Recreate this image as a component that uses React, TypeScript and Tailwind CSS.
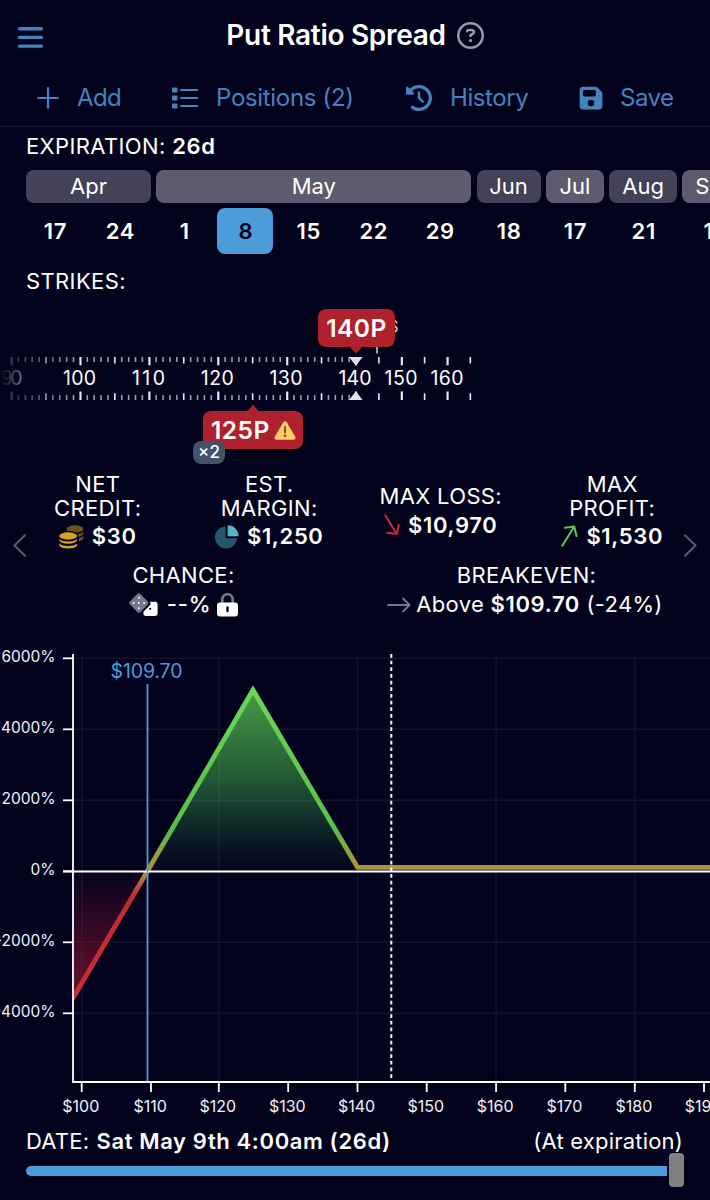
import React from "react";
import { FaClockRotateLeft, FaFloppyDisk, FaRegCircleQuestion } from "react-icons/fa6";

const months = [
  { name: "Apr", tone: "bg-[#434256]", width: "w-[125px]", days: [["17", "w-[58px]"], ["24", "w-[62px]"]] },
  { name: "May", tone: "bg-[#5d5b6d]", width: "w-[315px]", days: [["1", "w-[56px]"], ["8", "w-[56px]"], ["15", "w-[60px]"], ["22", "w-[60px]"], ["29", "w-[63px]"]] },
  { name: "Jun", tone: "bg-[#434256]", width: "w-[64px]", days: [["18", "w-[64px]"]] },
  { name: "Jul", tone: "bg-[#5d5b6d]", width: "w-[58px]", days: [["17", "w-[58px]"]] },
  { name: "Aug", tone: "bg-[#434256]", width: "w-[68px]", days: [["21", "w-[68px]"]] },
  { name: "Sep", tone: "bg-[#5d5b6d]", width: "w-[66px]", days: [["18", "w-[66px]"]] },
];

function ListIcon() {
  return (
    <svg width="27" height="22" viewBox="0 0 27 22" fill="currentColor">
      {[0.5, 8.5, 16.5].map((y) => (
        <g key={y}>
          <rect x="0" y={y} width="5.4" height="5" rx="1.2" />
          <rect x="8" y={y + 1.5} width="18.3" height="2" rx="1" />
        </g>
      ))}
    </svg>
  );
}

function Header() {
  return (
    <header className="flex h-[127px] flex-col border-b border-[#14173a] text-[#4484bd]">
      <div className="flex h-[70px] items-center px-[18px]">
        <svg className="mt-[4px]" width="25" height="23" viewBox="0 0 25 23" fill="currentColor">
          <rect y="1" width="25" height="3.4" rx="1.5" />
          <rect y="9.7" width="25" height="3.4" rx="1.5" />
          <rect y="18.4" width="25" height="3.4" rx="1.5" />
        </svg>
        <div className="flex flex-1 items-center justify-center pr-[25px]">
          <h1 className="text-[28px] font-semibold tracking-[-0.3px] text-white">Put Ratio Spread</h1>
          <FaRegCircleQuestion className="ml-[11px] text-[27px] text-[#9a98b5]" />
        </div>
      </div>
      <nav className="flex h-[56px] items-center pl-[37px] text-[24px] tracking-[-0.32px]">
        <svg width="22" height="22" viewBox="0 0 22 22" stroke="currentColor" strokeWidth="2.2" strokeLinecap="round">
          <path d="M11 1.2v19.6M1.2 11h19.6" />
        </svg>
        <span className="ml-[18px] w-[95px] tracking-[-0.6px]">Add</span>
        <ListIcon />
        <span className="ml-[17px] w-[190px] whitespace-nowrap">Positions (2)</span>
        <FaClockRotateLeft className="text-[26px]" />
        <span className="ml-[18px] w-[128px] tracking-[-0.4px]">History</span>
        <FaFloppyDisk className="text-[26px]" />
        <span className="ml-[16px] tracking-[-0.5px]">Save</span>
      </nav>
    </header>
  );
}

function Expirations() {
  return (
    <section className="h-[170px]">
      <p className="h-[43px] pl-[26px] text-[22px] leading-[38px] tracking-[0.38px]">
        EXPIRATION: <b className="font-semibold tracking-[0.6px]">26d</b>
      </p>
      <div className="flex gap-[5.3px] pl-[26px]">
        {months.map((m) => (
          <div key={m.name} className={`shrink-0 ${m.width}`}>
            <div className={`flex h-[33px] items-center justify-center rounded-[8px] text-[22px] ${m.tone}`}>{m.name}</div>
            <div className="mt-[5px] flex justify-between">
              {m.days.map(([d, w]) => (
                <div
                  key={d}
                  className={`flex h-[46px] shrink-0 items-center justify-center rounded-[8px] pl-[1px] text-[22px] font-semibold tracking-[0.7px] ${w} ${d === "8" ? "bg-[#4d9bd9] text-[#03021c]" : ""}`}
                >
                  {d}
                </div>
              ))}
            </div>
          </div>
        ))}
      </div>
      <p className="pl-[26px] text-[22px] leading-[55px] tracking-[0.38px]">STRIKES:</p>
    </section>
  );
}

function Ruler() {
  const ticks: { x: number; kind: number }[] = [];
  for (let s = 90; s <= 140; s++) {
    ticks.push({ x: 356 - (140 - s) * 6.89, kind: s % 10 === 0 ? 2 : s % 5 === 0 ? 1 : 0 });
  }
  for (let i = 1; i <= 5; i++) {
    ticks.push({ x: 356 + i * 22.87, kind: i % 2 === 0 ? 2 : 1 });
  }
  const labels: [number, string][] = [[11.5, "90"], [79.5, "100"], [148.5, "110"], [217.3, "120"], [286, "130"], [355, "140"], [401, "150"], [447, "160"]];
  return (
    <section className="relative h-[173px]">
      <svg className="block" width="710" height="173" viewBox="0 297 710 173">
        <defs>
          <linearGradient id="edge" gradientUnits="userSpaceOnUse" x1="0" y1="0" x2="75" y2="0">
            <stop offset="0" stopColor="#03021c" />
            <stop offset="0.25" stopColor="#03021c" stopOpacity="0.64" />
            <stop offset="1" stopColor="#03021c" stopOpacity="0" />
          </linearGradient>
        </defs>
        {ticks.map(({ x, kind }) => (
          <g key={x} fill={kind === 0 ? "#9c9bab" : "#e6e6ee"}>
            <rect x={x - (kind === 2 ? 1 : 0.8)} y="357" width={kind === 2 ? 2.2 : 1.6} height={[5, 6.5, 8.3][kind]} />
            <rect x={x - (kind === 2 ? 1 : 0.8)} y={400 - [5, 6.7, 8.5][kind]} width={kind === 2 ? 2.2 : 1.6} height={[5, 6.7, 8.5][kind]} />
          </g>
        ))}
        {labels.map(([x, t]) => (
          <text key={t} x={x} y="385.3" textAnchor="middle" fontSize="19.5" fill="#fff" textLength={t === "90" ? 22 : 33}>{t}</text>
        ))}
        <rect x="0" y="350" width="75" height="55" fill="url(#edge)" />
        <path d="M349 357h13.6l-6.8 8.7zM349 400h13.6l-6.8-8.7z" fill="#e2e2ea" />
        <path d="M377 345v8.5" stroke="#c9c9d3" strokeWidth="1.6" />
        <text x="398.7" y="331.7" textAnchor="end" fontSize="16.5" fill="#d6d6df">S</text>
        <path d="M349 346h14l-7 7.5zM246 413h14l-7-8.5z" fill="#af212d" />
      </svg>
      <div className="absolute left-[318px] top-[12px] flex h-[38px] w-[77px] items-center justify-center rounded-[8px] bg-[#af212d] pt-[1px] text-[24.5px] font-semibold tracking-[0.5px]">140P</div>
      <div className="absolute left-[203px] top-[114px] flex h-[38px] w-[100px] items-center rounded-[8px] bg-[#af212d] pl-[8px] pt-[1px] text-[24.5px] font-semibold tracking-[0.5px]">
        <span className="w-[63px]">125P</span>
        <svg width="22" height="19" viewBox="0 0 22 19">
          <path d="M9.3 1.2Q11-.9 12.7 1.2L21.4 16Q22 18.7 19.6 18.8H2.4Q0 18.7.6 16z" fill="#fbcd67" />
          <path d="M11 6v5.4" stroke="#a04322" strokeWidth="2" strokeLinecap="round" />
          <circle cx="11" cy="14.8" r="1.4" fill="#a04322" />
        </svg>
      </div>
      <div className="absolute left-[193px] top-[144px] flex h-[23px] w-[32px] items-center justify-center rounded-[8px] bg-[#43536a] text-[17px] font-medium">×2</div>
    </section>
  );
}

function Coins() {
  return (
    <svg width="25" height="24" viewBox="0 0 25 24">
      <g fill="#6b531f">
        <ellipse cx="16" cy="4" rx="8.5" ry="3.7" />
        <path d="M19 9q4-.6 5.5-2.6v2.4q-1 2.2-5.5 2.9zM20 13.3q3.2-.7 4.5-2.3v2.4q-1 2-4.5 2.8z" />
      </g>
      <ellipse cx="9.2" cy="11" rx="10.2" ry="4.9" fill="#03021c" />
      <g fill="#d3a22f">
        <ellipse cx="9.2" cy="11" rx="9" ry="3.7" />
        <path d="M.3 14q2.500 2.500 8.900 2.500t8.900-2.500v1.600q-1.500 3.100-8.900 3.100T.3 15.600zM.3 18.500q2.500 2.500 8.900 2.500t8.900-2.500v1.700q-1.500 3.300-8.900 3.300T.3 20.200z" />
      </g>
    </svg>
  );
}

function Pie() {
  return (
    <svg width="24" height="24" viewBox="0 0 24 24">
      <path d="M10.5 1.2v12.1h11.8A11.2 11.2 0 1 1 10.5 1.2z" fill="#26566b" />
      <path d="M12.7.3a11 11 0 0 1 10.9 10.900H12.7z" fill="#57b6c6" />
    </svg>
  );
}

function Dice() {
  return (
    <svg width="29" height="24" viewBox="0 0 29 24">
      <path d="M21 8.7h5a2.6 2.6 0 0 1 2.6 2.6v9a2.6 2.6 0 0 1-2.6 2.6h-9a2.6 2.6 0 0 1-2.6-2.6v-1.5l6.5-6.5q1.3-1.6.1-3.6z" fill="#fff" />
      <circle cx="21.2" cy="15.8" r="1.1" fill="#03021c" />
      <path d="M8.3 1.1Q9.9-.4 11.5 1.1L18.8 8.4Q20.3 10 18.8 11.6L11.5 18.9Q9.9 20.4 8.3 18.9L1 11.6Q-.5 10 1 8.4z" fill="#77768a" />
      <g fill="#fff">
        <circle cx="9.9" cy="4.8" r="1" />
        <circle cx="4.7" cy="10" r="1" />
        <circle cx="9.9" cy="10" r="1" />
        <circle cx="15.1" cy="10" r="1" />
        <circle cx="9.9" cy="15.2" r="1" />
      </g>
    </svg>
  );
}

function Lock() {
  return (
    <svg width="21" height="24" viewBox="0 0 21 24">
      <path d="M5.3 10V6.400a5.200 5.200 0 0 1 10.400 0V10" fill="none" stroke="#77768a" strokeWidth="2.7" />
      <rect x="0" y="9.5" width="21" height="14" rx="3" fill="#fff" />
      <rect x="9.3" y="13.3" width="2.4" height="6" rx="1.2" fill="#03021c" />
    </svg>
  );
}

function Metric({ label, children }: { label: React.ReactNode; children: React.ReactNode }) {
  return (
    <div className="flex flex-col items-center justify-center text-center text-[22px] leading-[23.5px] tracking-[0.33px]">
      <div>{label}</div>
      <div className="mt-[1px] flex h-[32px] items-center whitespace-nowrap">{children}</div>
    </div>
  );
}

function Amount({ children }: { children: React.ReactNode }) {
  return <b className="ml-[8px] font-semibold tracking-[0.65px]">{children}</b>;
}

function Metrics() {
  return (
    <section className="relative h-[180px] px-[12px] pt-[3px]">
      <div className="grid h-[80px] grid-cols-4">
        <Metric label={<>NET<br />CREDIT:</>}>
          <Coins /><Amount>$30</Amount>
        </Metric>
        <Metric label={<>EST.<br />MARGIN:</>}>
          <Pie /><Amount>$1,250</Amount>
        </Metric>
        <Metric label="MAX LOSS:">
          <svg width="16" height="22" viewBox="0 0 16 22" fill="none" stroke="#c92d38" strokeWidth="2" strokeLinecap="round" strokeLinejoin="round">
            <path d="M1.2 1.3 12.8 20M3.2 18.8l9.6 1.2L14.8 11" />
          </svg>
          <Amount>$10,970</Amount>
        </Metric>
        <Metric label={<>MAX<br />PROFIT:</>}>
          <svg className="mb-[2px]" width="17" height="22" viewBox="0 0 17 22" fill="none" stroke="#5cc850" strokeWidth="2" strokeLinecap="round" strokeLinejoin="round">
            <path d="M1.3 20.7 13.3 1.5M4 2.8l9.3-1.3L15.5 11" />
          </svg>
          <Amount>$1,530</Amount>
        </Metric>
      </div>
      <div className="mt-[9.5px] grid h-[60px] grid-cols-2">
        <Metric label="CHANCE:">
          <Dice /><span className="ml-[9px] mr-[6px] font-medium tracking-[0.8px]">--%</span><Lock />
        </Metric>
        <Metric label="BREAKEVEN:">
          <svg width="24" height="16" viewBox="0 0 24 16" fill="none" stroke="#77768a" strokeWidth="1.9" strokeLinecap="round" strokeLinejoin="round">
            <path d="M1 8h21.5M16 1.5 22.5 8 16 14.5" />
          </svg>
          <span className="ml-[5px] mr-[3px] whitespace-pre tracking-[0.3px]">Above <b className="font-semibold tracking-[0.65px]">$109.70</b> (-24%)</span>
        </Metric>
      </div>
      <svg className="absolute left-[13px] top-[64px]" width="13" height="23" viewBox="0 0 13 23" fill="none" stroke="#5b5a70" strokeWidth="2" strokeLinecap="round">
        <path d="M12 1.2 1.5 11.5 12 21.8" />
      </svg>
      <svg className="absolute left-[684px] top-[64px]" width="13" height="23" viewBox="0 0 13 23" fill="none" stroke="#5b5a70" strokeWidth="2" strokeLinecap="round">
        <path d="M1 1.2 11.5 11.5 1 21.8" />
      </svg>
    </section>
  );
}

function Chart() {
  const xs = [[100, 81.7], [110, 151], [120, 218.8], [130, 288.2], [140, 357.5], [150, 426.7], [160, 496.1], [170, 565.3], [180, 634.8], [190, 704]];
  const ys = [6000, 4000, 2000, 0, -2000, -4000].map((v) => [v, 871.3 - (v / 2000) * 71]);
  return (
    <svg className="block" width="710" height="475" viewBox="0 650 710 475">
      <defs>
        <linearGradient id="pl" gradientUnits="userSpaceOnUse" x1="0" y1="690" x2="0" y2="997">
          <stop offset="0" stopColor="#66d957" />
          <stop offset="0.46" stopColor="#5bbd4b" />
          <stop offset="0.57" stopColor="#a8943a" />
          <stop offset="0.6" stopColor="#b08a38" />
          <stop offset="0.67" stopColor="#c02c34" />
          <stop offset="1" stopColor="#ca2b36" />
        </linearGradient>
        <linearGradient id="gain" gradientUnits="userSpaceOnUse" x1="0" y1="690" x2="0" y2="871">
          <stop offset="0" stopColor="#52ad4b" stopOpacity="0.9" />
          <stop offset="0.5" stopColor="#3c9c46" stopOpacity="0.56" />
          <stop offset="1" stopColor="#1c7040" stopOpacity="0.02" />
        </linearGradient>
        <linearGradient id="loss" gradientUnits="userSpaceOnUse" x1="0" y1="871" x2="0" y2="997">
          <stop offset="0" stopColor="#9c1436" stopOpacity="0.03" />
          <stop offset="1" stopColor="#9c1a36" stopOpacity="0.66" />
        </linearGradient>
        <clipPath id="plot">
          <rect x="73" y="650" width="637" height="432" />
        </clipPath>
      </defs>
      <g stroke="#131330" strokeWidth="1.5">
        {xs.filter(([v]) => v % 20 === 0).map(([v, x]) => <path key={v} d={`M${x} 655V1082`} />)}
        {ys.map(([v, y]) => <path key={v} d={`M73 ${y}H710`} />)}
      </g>
      <path d="M147.5 871 253 690 357.5 867V871z" fill="url(#gain)" />
      <path d="M73 871H147.5L73 998z" fill="url(#loss)" />
      <path d="M70 1003 147.5 871 253 690 357.5 867.3H710" fill="none" stroke="url(#pl)" strokeWidth="4.8" clipPath="url(#plot)" />
      <g stroke="#fff" strokeWidth="1.8">
        <path d="M63 871.5H710" />
        <path d="M73 654V1082H710" fill="none" />
        {ys.map(([v, y]) => <path key={v} d={`M63 ${y}H73`} />)}
        {xs.map(([v, x]) => <path key={v} d={`M${x} 1082v10`} />)}
      </g>
      <path d="M147.5 684V1081" stroke="#4d9bd9" strokeWidth="1.8" />
      <path d="M391.3 654V1081" stroke="#fff" strokeWidth="2" strokeDasharray="3.7 2.97" />
      <text x="110.5" y="677.5" fontSize="19.5" fill="#4d9bd9" textLength="72">$109.70</text>
      <g fill="#f2f2f7">
        {ys.map(([v, y]) => <text key={v} x="55.6" y={y + 3.6} fontSize="15.5" textAnchor="end">{v}%</text>)}
        {xs.map(([v, x]) => <text key={v} x={x - 0.9} y="1112" fontSize="16" textAnchor="middle">${v}</text>)}
      </g>
    </svg>
  );
}

export default function App() {
  return (
    <main className="h-[1200px] w-[710px] overflow-hidden bg-[#03021c] font-['Inter',sans-serif] text-white">
      <Header />
      <Expirations />
      <Ruler />
      <Metrics />
      <Chart />
      <section className="pl-[26px]">
        <div className="flex h-[32px] items-center justify-between pr-[27px] text-[22px] tracking-[0.2px]">
          <span>DATE: <b className="ml-[1px] font-semibold tracking-[0.62px]">Sat May 9th 4:00am (26d)</b></span>
          <span>(At expiration)</span>
        </div>
        <div className="mt-[-4px] flex h-[34px] items-center">
          <div className="mt-[2px] h-[10px] w-[641px] rounded-l-full bg-[#4d9bd9]" />
          <div className="ml-[1.5px] h-[34px] w-[15.5px] rounded-[4px] bg-[#808080]" />
        </div>
      </section>
    </main>
  );
}
